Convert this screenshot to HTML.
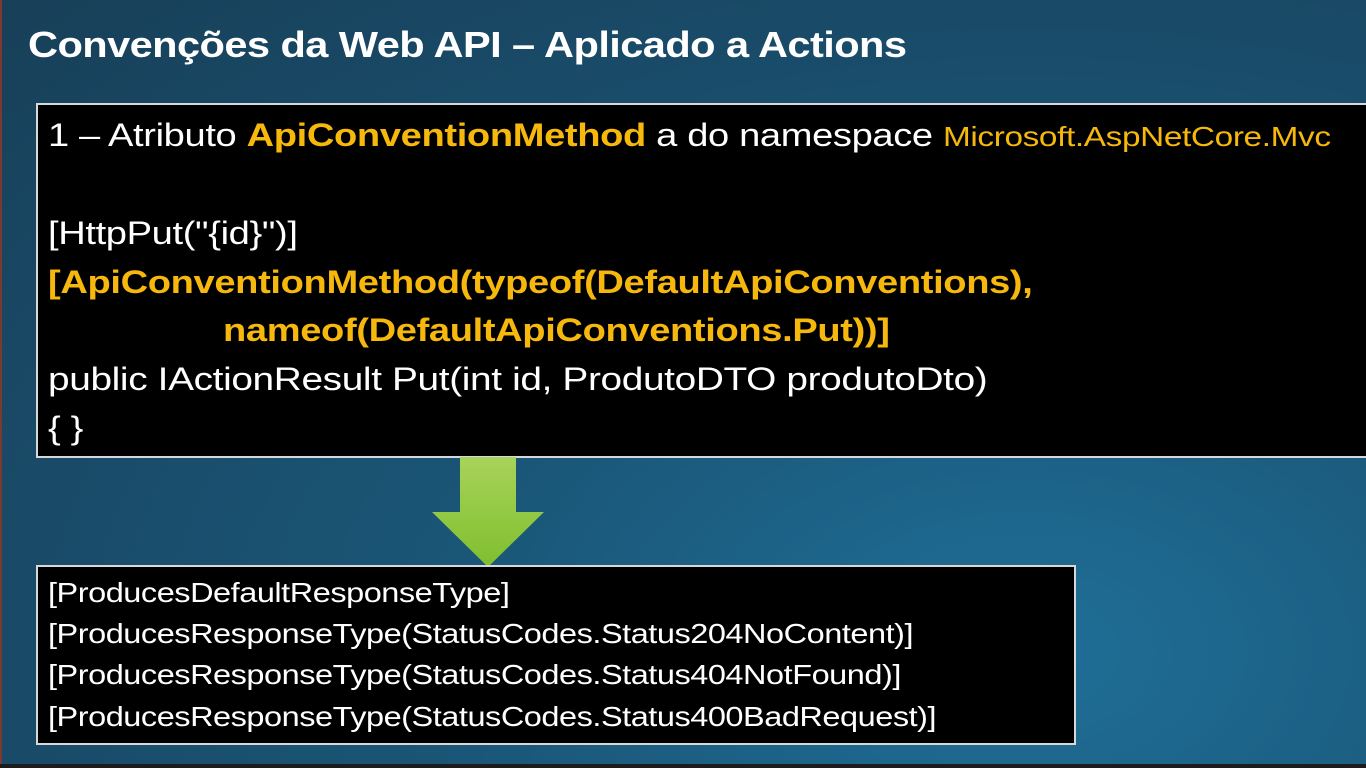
<!DOCTYPE html>
<html><head><meta charset="utf-8"><style>
html,body{margin:0;padding:0}
body{width:1366px;height:768px;overflow:hidden;position:relative;font-family:"Liberation Sans",sans-serif;
background:radial-gradient(ellipse at 75% 85%,#1f6f98 0%,#1a5677 40%,#183f58 100%);}
.edge{position:absolute;left:0;top:0;width:2px;height:768px;background:#7a3a30}
.bottom{position:absolute;left:0;top:764px;width:1366px;height:4px;background:#1c1c1c}
.title{position:absolute;left:28px;top:24px;color:#fff;font-weight:bold;font-size:36px;letter-spacing:-0.5px;white-space:nowrap;transform:scaleX(1.155);transform-origin:left}
.box{position:absolute;background:#000;border:2px solid #d8d8d8;box-sizing:border-box;color:#fff}
.l{position:absolute;left:10px;white-space:nowrap;font-size:32px;letter-spacing:-0.3px;transform:scaleX(1.19);transform-origin:left}
.g{color:#f6b80c;font-weight:bold}
.gn{color:#f6b80c;font-size:28px}
.b .l{font-size:28px;letter-spacing:-0.4px;transform:scaleX(1.16)}
</style></head><body>
<div class="edge"></div>
<div class="title">Convenções da Web API – Aplicado a Actions</div>
<div class="box" style="left:36px;top:103px;width:1340px;height:355px">
<div class="l" style="top:12px">1 – Atributo <span class="g">ApiConventionMethod</span> a do namespace <span class="gn">Microsoft.AspNetCore.Mvc</span></div>
<div class="l" style="top:110px">[HttpPut("{id}")]</div>
<div class="l g" style="top:159px">[ApiConventionMethod(typeof(DefaultApiConventions),</div>
<div class="l g" style="top:207px;left:185px">nameof(DefaultApiConventions.Put))]</div>
<div class="l" style="top:256px;transform:scaleX(1.213)">public IActionResult Put(int id, ProdutoDTO produtoDto)</div>
<div class="l" style="top:305px">{ }</div>
</div>
<svg style="position:absolute;left:432px;top:457px" width="112" height="110"><defs><linearGradient id="a" x1="0" y1="0" x2="0" y2="1"><stop offset="0" stop-color="#a8d35a"/><stop offset="1" stop-color="#7fbf2e"/></linearGradient></defs><polygon points="28,0 84,0 84,55 112,55 56,110 0,55 28,55" fill="url(#a)"/></svg>
<div class="box b" style="left:36px;top:565px;width:1040px;height:180px">
<div class="l" style="top:10px">[ProducesDefaultResponseType]</div>
<div class="l" style="top:51px">[ProducesResponseType(StatusCodes.Status204NoContent)]</div>
<div class="l" style="top:92px">[ProducesResponseType(StatusCodes.Status404NotFound)]</div>
<div class="l" style="top:134px">[ProducesResponseType(StatusCodes.Status400BadRequest)]</div>
</div>
<div class="bottom"></div>
</body></html>
